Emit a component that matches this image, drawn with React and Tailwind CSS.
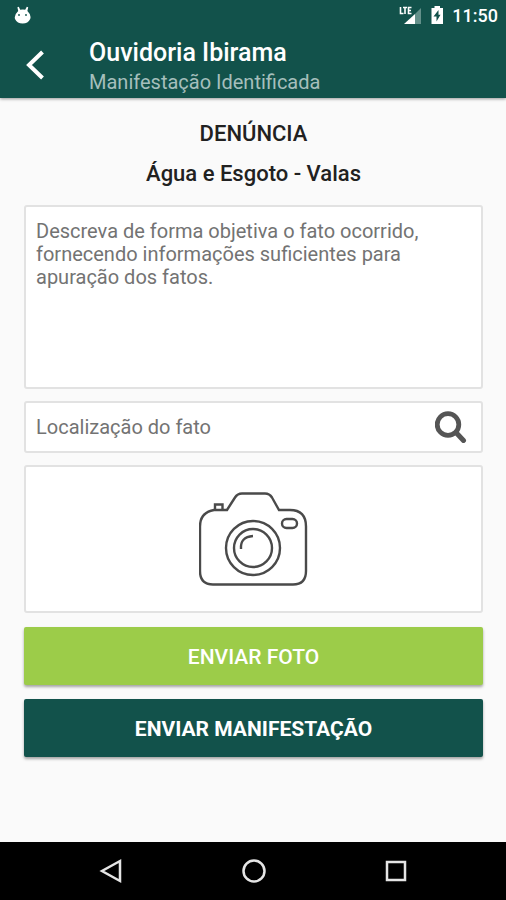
import React from "react";

function StatusBar() {
  return (
    <div className="flex h-8 items-center justify-between pr-2 pl-3.5 text-white">
      <svg className="h-5 w-5" viewBox="0 0 20 20" fill="currentColor" aria-hidden="true">
        <path d="M3.4 1.2 L4.8 .8 L6.2 3.8 Q9 3 11.2 3.8 L12.8 .8 L14.2 1.2 L13.4 5 Q17.6 9 16.2 13 Q14 17.5 8.7 17.5 Q3.2 17.5 1 13 Q-.1 9 4.2 5 Z" />
        <circle cx="5" cy="9" r=".9" fill="#12524b" />
        <circle cx="12" cy="9" r=".9" fill="#12524b" />
      </svg>
      <div className="flex items-center">
        <svg className="h-5 w-6" viewBox="0 0 24 20" aria-hidden="true">
          <path d="M23 2 V18 H17 V8 Z" fill="#63908a" />
          <path d="M17 8 V18 H6 Z" fill="#fff" />
          <path d="M2.5 1 V7.500 H5.500 M5 1.500 H9 M7 1.500 V8 M13.500 1.500 H10.500 V7.500 H13.500 M10.500 4.500 H13" fill="none" stroke="#fff" strokeWidth="1.6" />
        </svg>
        <svg className="ml-2 h-5 w-3.5" viewBox="0 0 14 20" aria-hidden="true">
          <path d="M4.500 0 H10 V2 H13 V18 H1.500 V2 H4.500 Z" fill="#fff" />
          <path d="M8.500 4 L3.500 10.500 H6.500 V15.500 L10.500 8.800 H8.500 Z" fill="#12524b" />
        </svg>
        <span className="ml-2 text-lg font-medium">11:50</span>
      </div>
    </div>
  );
}

function Header() {
  return (
    <header className="relative bg-[#12524b] shadow-[0_1px_3px_rgba(0,0,0,0.4)]">
      <StatusBar />
      <div className="flex h-[66px] items-center">
        <button type="button" aria-label="Voltar" className="ml-6 flex h-10 w-6 items-center text-white">
          <svg className="h-8 w-6" viewBox="0 0 24 32" fill="none" stroke="currentColor" strokeWidth="4" aria-hidden="true">
            <path d="M18.500 3 L5 16 L18.500 29" />
          </svg>
        </button>
        <div className="ml-[41px] pt-1">
          <h1 className="text-[25px] leading-[30px] font-medium text-white">Ouvidoria Ibirama</h1>
          <p className="text-[20px] leading-[28px] text-[#a5bfbc]">Manifestação Identificada</p>
        </div>
      </div>
    </header>
  );
}

function Camera() {
  return (
    <svg className="h-24 w-[110px]" viewBox="0 0 110 96" fill="none" stroke="#4a4a4a" strokeWidth="2.4" aria-hidden="true">
      <path d="M28 19 H15 Q1 21.500 1 35.500 V80 Q1 93.500 14 93.500 H94 Q107 93.500 107 80 V35.500 Q107 19 91 19 H80 L73 6.500 Q70.500 2.500 66 2.500 H43 Q38.500 2.500 36 6.500 L28 19 Z" />
      <path d="M16 18.500 V13.500 H23.500 V18.500" />
      <circle cx="54" cy="57" r="27" />
      <circle cx="54" cy="57" r="19" />
      <path d="M42 58 Q41 46 54 45" />
      <rect x="83" y="28" width="15" height="9" rx="4.500" />
    </svg>
  );
}

function NavBar() {
  return (
    <nav className="flex h-[58px] items-center justify-around bg-black pr-[38px] pl-10 text-[#e5e5e5]">
      <button type="button" aria-label="Voltar">
        <svg className="h-7 w-7" viewBox="0 0 28 28" fill="none" stroke="currentColor" strokeWidth="2.500" aria-hidden="true">
          <path d="M23 4 V24 L5 14 Z" />
        </svg>
      </button>
      <button type="button" aria-label="Início">
        <svg className="h-7 w-7" viewBox="0 0 28 28" fill="none" stroke="currentColor" strokeWidth="2.500" aria-hidden="true">
          <circle cx="14" cy="14" r="10.500" />
        </svg>
      </button>
      <button type="button" aria-label="Recentes">
        <svg className="h-7 w-7" viewBox="0 0 28 28" fill="none" stroke="currentColor" strokeWidth="2.500" aria-hidden="true">
          <rect x="4" y="5" width="18" height="18" />
        </svg>
      </button>
    </nav>
  );
}

export default function App() {
  return (
    <div className="flex min-h-screen flex-col bg-[#fafafa] font-[Roboto,'Liberation_Sans',sans-serif]">
      <Header />
      <main className="flex-1 pt-4 pr-[23px] pl-6">
        <h2 className="text-center text-[22px] leading-10 font-medium text-[#212121]">DENÚNCIA</h2>
        <h3 className="text-center text-[22px] leading-10 font-medium text-[#212121]">Água e Esgoto - Valas</h3>
        <form className="mt-[11px] flex flex-col" onSubmit={(e) => e.preventDefault()}>
          <textarea
            aria-label="Descrição do fato"
            placeholder="Descreva de forma objetiva o fato ocorrido, fornecendo informações suficientes para apuração dos fatos."
            className="h-[184px] w-full resize-none rounded-[3px] border-2 border-[#e2e2e2] bg-white px-[10px] py-[13px] text-[20px] leading-[23px] text-[#333] outline-none placeholder:text-[#737373]"
          />
          <div className="mt-3 flex h-[52px] items-center rounded-[3px] border-2 border-[#e2e2e2] bg-white pr-[14px] pl-[10px]">
            <input
              type="text"
              aria-label="Localização do fato"
              placeholder="Localização do fato"
              className="min-w-0 flex-1 bg-transparent text-[20px] text-[#333] outline-none placeholder:text-[#737373]"
            />
            <button type="button" aria-label="Buscar localização">
              <svg className="h-8 w-8" viewBox="0 0 32 32" fill="none" stroke="#555" aria-hidden="true">
                <circle cx="13" cy="13.500" r="10.800" strokeWidth="4.800" />
                <path d="M21 21.500 L28.500 29.500" strokeWidth="5" strokeLinecap="round" />
              </svg>
            </button>
          </div>
          <button
            type="button"
            aria-label="Adicionar foto"
            className="mt-3 flex h-[148px] items-center justify-center rounded-[3px] border-2 border-[#e2e2e2] bg-white"
          >
            <Camera />
          </button>
          <button
            type="button"
            className="mt-[14px] h-[58px] rounded-[2px] bg-[#9ccc49] pt-[3px] text-[21px] font-medium text-white shadow-[0_2px_3px_rgba(0,0,0,0.35)]"
          >
            ENVIAR FOTO
          </button>
          <button
            type="submit"
            className="mt-[14px] h-[58px] rounded-[2px] bg-[#12524b] pt-[3px] text-[21px] font-bold text-white shadow-[0_2px_3px_rgba(0,0,0,0.35)]"
          >
            ENVIAR MANIFESTAÇÃO
          </button>
        </form>
      </main>
      <NavBar />
    </div>
  );
}
